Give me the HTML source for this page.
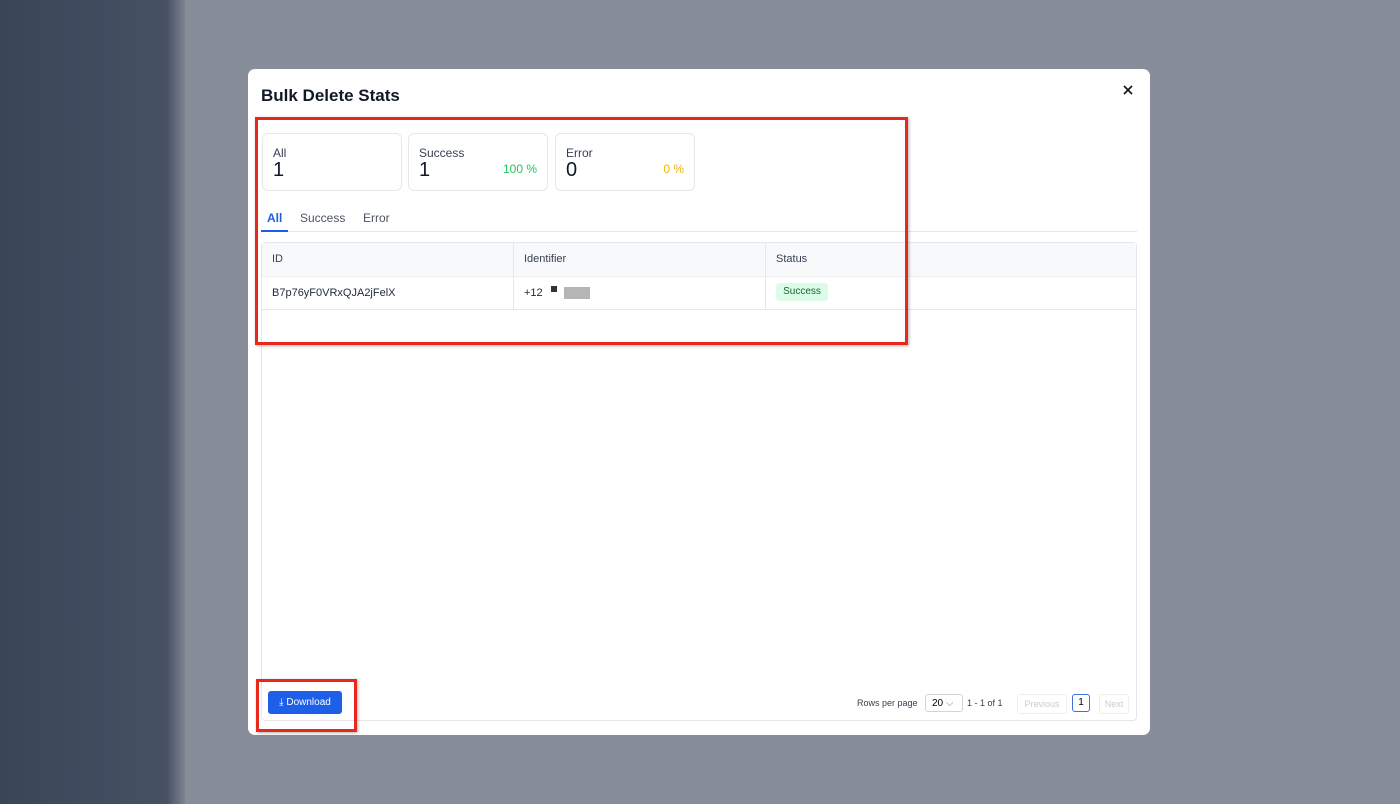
<!DOCTYPE html><html><head><style>
body{margin:0;width:1400px;height:804px;position:relative;overflow:hidden;font-family:"Liberation Sans",sans-serif;background:#878d99}
.side{position:absolute;left:0;top:0;width:185px;height:804px;background:linear-gradient(90deg,#3a4558,#465164 90%,#7d8491)}
.modal{position:absolute;left:248px;top:69px;width:902px;height:666px;background:#fff;border-radius:7px}
.abs{position:absolute}
.card{position:absolute;top:64px;width:140px;height:58px;border:1px solid #e5e7eb;border-radius:6px;box-sizing:border-box}
.card .l{position:absolute;left:10px;top:12px;font-size:12px;color:#374151}
.card .n{position:absolute;left:10px;top:25px;font-size:20px;color:#111827}
.card .p{position:absolute;right:10px;top:28px;font-size:12px}
.red{position:absolute;border:3px solid #e8271d;box-sizing:border-box;box-shadow:1px 1px 3px rgba(0,0,0,.3)}
</style></head><body>
<div class="side"></div>
<div class="modal">
<div class="abs" style="left:13px;top:17px;font-size:17px;font-weight:bold;color:#111827">Bulk Delete Stats</div>
<svg class="abs" style="left:875px;top:16px" width="10" height="10" viewBox="0 0 10 10"><path d="M1 1L9 9M9 1L1 9" stroke="#111" stroke-width="1.6"/></svg>
<div class="card" style="left:14px"><div class="l">All</div><div class="n">1</div></div>
<div class="card" style="left:160px"><div class="l">Success</div><div class="n">1</div><div class="p" style="color:#22c55e">100 %</div></div>
<div class="card" style="left:307px"><div class="l">Error</div><div class="n">0</div><div class="p" style="color:#f0b400">0 %</div></div>
<div class="abs" style="left:13px;top:162px;width:876px;border-bottom:1px solid #e5e7eb;height:0"></div>
<div class="abs" style="left:13px;top:161px;width:27px;height:2px;background:#1d5fe8"></div>
<div class="abs" style="left:19px;top:142px;font-size:12px;color:#1d5fe8;font-weight:bold">All</div>
<div class="abs" style="left:52px;top:142px;font-size:12px;color:#4b5563">Success</div>
<div class="abs" style="left:115px;top:142px;font-size:12px;color:#4b5563">Error</div>
<div class="abs" style="left:13px;top:173px;width:876px;height:479px;border:1px solid #e5e7eb;border-radius:4px;box-sizing:border-box">
<div class="abs" style="left:0;top:0;width:874px;height:33px;background:#f8f9fb;border-bottom:1px solid #eceef2"></div>
<div class="abs" style="left:0;top:66px;width:874px;border-bottom:1px solid #e5e7eb"></div>
<div class="abs" style="left:251px;top:0;height:66px;border-left:1px solid #e5e7eb"></div>
<div class="abs" style="left:503px;top:0;height:66px;border-left:1px solid #e5e7eb"></div>
<div class="abs" style="left:10px;top:10px;font-size:11px;color:#374151">ID</div>
<div class="abs" style="left:262px;top:10px;font-size:11px;color:#374151">Identifier</div>
<div class="abs" style="left:514px;top:10px;font-size:11px;color:#374151">Status</div>
<div class="abs" style="left:10px;top:44px;font-size:11px;color:#1f2937">B7p76yF0VRxQJA2jFelX</div>
<div class="abs" style="left:262px;top:44px;font-size:11px;color:#1f2937">+12</div>
<div class="abs" style="left:289px;top:43px;width:6px;height:6px;background:#333"></div>
<div class="abs" style="left:302px;top:44px;width:26px;height:12px;background:#b5b5b5"></div>
<div class="abs" style="left:514px;top:40px;width:52px;height:18px;background:#dcfce7;border-radius:3px;font-size:10px;color:#166534;text-align:center;line-height:18px">Success</div>
<div class="abs" style="left:6px;top:448px;width:74px;height:23px;background:#1d5fe8;border-radius:3px;color:#fff;font-size:10px;line-height:23px;text-align:center">⤓ Download</div>
<div class="abs" style="left:595px;top:455px;font-size:9px;color:#374151">Rows per page</div>
<div class="abs" style="left:663px;top:451px;width:38px;height:18px;border:1px solid #d1d5db;border-radius:3px;font-size:10px;line-height:18px;padding-left:6px;box-sizing:border-box">20 <span style="color:#888">⌵</span></div>
<div class="abs" style="left:705px;top:455px;font-size:9px;color:#374151">1 - 1 of 1</div>
<div class="abs" style="left:755px;top:451px;width:48px;height:18px;border:1px solid #eee;border-radius:3px;font-size:9px;color:#ccc;text-align:center;line-height:18px">Previous</div>
<div class="abs" style="left:810px;top:451px;width:18px;height:18px;border:1px solid #3b6fe8;border-radius:3px;box-sizing:border-box;font-size:10px;text-align:center;line-height:16px">1</div>
<div class="abs" style="left:837px;top:451px;width:28px;height:18px;border:1px solid #eee;border-radius:3px;font-size:9px;color:#ccc;text-align:center;line-height:18px">Next</div>
</div>
</div>
<div class="red" style="left:255px;top:117px;width:653px;height:228px"></div>
<div class="red" style="left:256px;top:679px;width:101px;height:53px"></div>
</body></html>
